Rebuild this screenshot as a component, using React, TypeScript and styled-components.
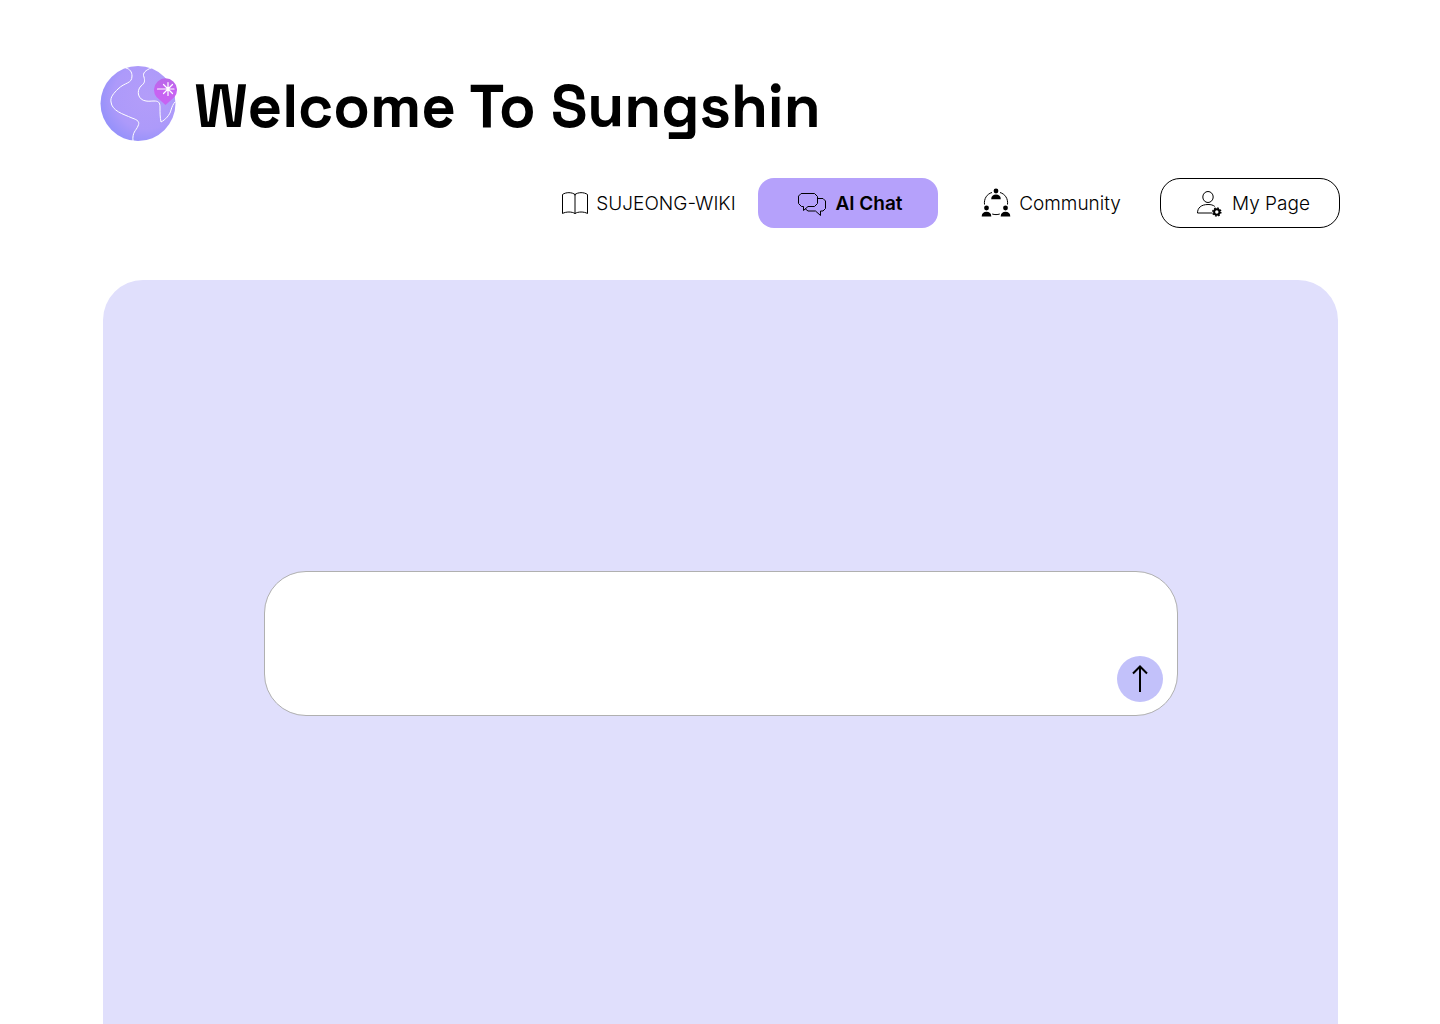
import React, { useState } from "react";
import styled, { createGlobalStyle, css } from "styled-components";

const GlobalStyle = createGlobalStyle`
  *, *::before, *::after { box-sizing: border-box; }
  body {
    margin: 0;
    background: #ffffff;
    color: #000000;
    font-family: Inter, "Liberation Sans", sans-serif;
  }
`;

const Page = styled.div`
  display: flex;
  flex-direction: column;
  min-height: 100vh;
  padding: 64px 100px 0;
`;

const Brand = styled.header`
  display: flex;
  align-items: center;
  gap: 14px;
  height: 80px;
`;

const Title = styled.h1`
  margin: 0;
  padding-top: 6px;
  font-family: "Space Grotesk", Inter, "Liberation Sans", sans-serif;
  font-size: 60px;
  font-weight: 700;
  line-height: 76px;
  white-space: nowrap;
`;

const Nav = styled.nav`
  display: flex;
  justify-content: flex-end;
  gap: 21px;
  margin-top: 34px;
`;

const NavLink = styled.a<{ $variant?: "active" | "outlined" }>`
  display: flex;
  align-items: center;
  justify-content: center;
  gap: 8px;
  width: 180px;
  height: 50px;
  padding-left: 4px;
  border: 1px solid transparent;
  border-radius: 16px;
  color: #000000;
  font-size: 19px;
  font-weight: 300;
  line-height: 25px;
  text-decoration: none;
  white-space: nowrap;

  svg { flex: none; }

  ${({ $variant }) => $variant === "active" && css`
    background: #b5a1fb;
    font-weight: 600;
  `}
  ${({ $variant }) => $variant === "outlined" && css`
    border-color: #000000;
    border-radius: 20px;
  `}
`;

const ChatPanel = styled.main`
  display: flex;
  flex: 1;
  align-items: flex-start;
  justify-content: center;
  margin: 52px 2px 0 3px;
  padding: 291px 160px 160px 161px;
  border-radius: 40px 40px 0 0;
  background: #e0dffc;
`;

const Composer = styled.form`
  display: flex;
  align-items: flex-end;
  gap: 16px;
  width: 100%;
  height: 145px;
  padding: 13px 14px 13px 32px;
  border: 1px solid #b0b0b0;
  border-radius: 42px;
  background: #ffffff;
`;

const MessageField = styled.textarea`
  flex: 1;
  align-self: stretch;
  padding: 12px 0;
  border: 0;
  outline: 0;
  resize: none;
  background: transparent;
  font: 300 19px/25px Inter, "Liberation Sans", sans-serif;
`;

const SendButton = styled.button`
  display: grid;
  place-items: center;
  width: 46px;
  height: 46px;
  padding: 0;
  border: 0;
  border-radius: 50%;
  background: #c2c1fa;
  color: #000000;
  cursor: pointer;
`;

const GlobeLogo = () => (
  <svg width="80" height="80" viewBox="0 0 80 80" fill="none" aria-hidden="true">
    <defs>
      <radialGradient id="globe" cx="0.62" cy="0.4" r="0.68">
        <stop offset="0" stopColor="#b39df9" />
        <stop offset="0.65" stopColor="#ad9afa" />
        <stop offset="1" stopColor="#9290fa" />
      </radialGradient>
      <linearGradient id="pin" x1="0" y1="0" x2="0" y2="1">
        <stop offset="0" stopColor="#b868e8" />
        <stop offset="0.5" stopColor="#c763f2" />
        <stop offset="1" stopColor="#c763f2" />
      </linearGradient>
    </defs>
    <circle cx="38" cy="39.500" r="37.500" fill="url(#globe)" />
    <g stroke="#ffffff" strokeWidth="1" strokeLinecap="round" strokeLinejoin="round">
      <path d="M26 4c4 1 6 4 6 8 0 8-7 6-14 13-4 4-8 8-7 13 1 9 12 12 21 16 6 2 8 4 6 8-2 5-6 6-5 15" />
      <path d="M51 4c-5 2-9 5-7 9 1 4 1 6-3 9-5 5-3 14 5 15 3 .5 5 0 8 0 4 0 6 1 6 6 0 6 0 10 1 15 4-2 9-7 10-12 1-3 2-6 4-8" />
    </g>
    <path d="M65.500 41 56.500 33a11.500 11.500 0 1 1 18 0Z" fill="url(#pin)" />
    <path d="M57.500 25H74M68 18.500v13M63.500 20.500l9 9M72.500 20.500l-9 9" stroke="#ffffff" strokeWidth="1.200" strokeLinecap="round" />
  </svg>
);

const BookIcon = () => (
  <svg width="26" height="30" viewBox="1 0 26 30" fill="none" stroke="#000000" strokeLinecap="round" strokeLinejoin="round" aria-hidden="true">
    <path d="M14 6.500C11 4 5 4 1.500 6.500v19c3.500-2 9.500-2 12.500 0 3-2 9-2 12.500 0v-19C23 4 17 4 14 6.500Zm0 0v19" />
  </svg>
);

const ChatIcon = () => (
  <svg width="30" height="30" viewBox="0 0 30 30" fill="none" stroke="#000000" strokeLinecap="round" strokeLinejoin="round" aria-hidden="true">
    <path d="M4.500 5.500h13l3 3v7l-3 3h-6.500l-4.500 4v-4h-2l-3-3v-7Z" />
    <path d="M20.500 10.500h5.500l2.500 2.500v7.500l-2.500 2.500h-2.500v4.500l-5-4.500h-7.500l-2.500-2" />
  </svg>
);

const CommunityIcon = () => (
  <svg width="30" height="30" viewBox="0 0 30 30" fill="#000000" aria-hidden="true">
    <circle cx="15" cy="3" r="2.400" />
    <path d="M10.200 11.200c0-3.200 2-4.700 4.800-4.700s4.800 1.500 4.800 4.700Z" />
    <circle cx="5.500" cy="20" r="2.400" />
    <path d="M.7 28.500c0-3.200 2-4.700 4.800-4.700s4.800 1.500 4.800 4.700Z" />
    <circle cx="24.500" cy="20" r="2.400" />
    <path d="M19.700 28.500c0-3.200 2-4.700 4.800-4.700s4.800 1.500 4.800 4.700Z" />
    <path d="M11 4.500C6 6 2.800 10.500 3.500 16.500M19 4.500c5 1.500 8.200 6 7.500 12M11.200 26c2.400.8 5.200.8 7.600 0" fill="none" stroke="#000000" strokeWidth="1" />
  </svg>
);

const ProfileIcon = () => (
  <svg width="30" height="30" viewBox="0 0 30 30" fill="none" stroke="#000000" aria-hidden="true">
    <ellipse cx="14" cy="9" rx="5.200" ry="5.500" />
    <path d="M18 25H3.500c0-5 3.500-8.500 10.500-8.500 3 0 5 .5 6.500 1.700" strokeLinecap="round" />
    <circle cx="22.800" cy="24" r="2.700" strokeWidth="2" />
    <circle cx="22.800" cy="24" r="4" strokeWidth="1.500" strokeDasharray="1.600 1.540" />
  </svg>
);

const ArrowUpIcon = () => (
  <svg width="20" height="30" viewBox="0 0 20 30" fill="none" stroke="currentColor" strokeWidth="2" aria-hidden="true">
    <path d="M10 28V3M3 9.500l7-7 7 7" />
  </svg>
);

export default function App() {
  const [message, setMessage] = useState("");

  return (
    <>
      <GlobalStyle />
      <Page>
        <Brand>
          <GlobeLogo />
          <Title>Welcome To Sungshin</Title>
        </Brand>
        <Nav aria-label="Main">
          <NavLink href="#wiki"><BookIcon />SUJEONG-WIKI</NavLink>
          <NavLink href="#chat" $variant="active" aria-current="page"><ChatIcon />AI Chat</NavLink>
          <NavLink href="#community"><CommunityIcon />Community</NavLink>
          <NavLink href="#profile" $variant="outlined"><ProfileIcon />My Page</NavLink>
        </Nav>
        <ChatPanel>
          <Composer onSubmit={(event) => { event.preventDefault(); setMessage(""); }}>
            <MessageField
              aria-label="Message"
              value={message}
              onChange={(event) => setMessage(event.target.value)}
            />
            <SendButton type="submit" aria-label="Send"><ArrowUpIcon /></SendButton>
          </Composer>
        </ChatPanel>
      </Page>
    </>
  );
}
